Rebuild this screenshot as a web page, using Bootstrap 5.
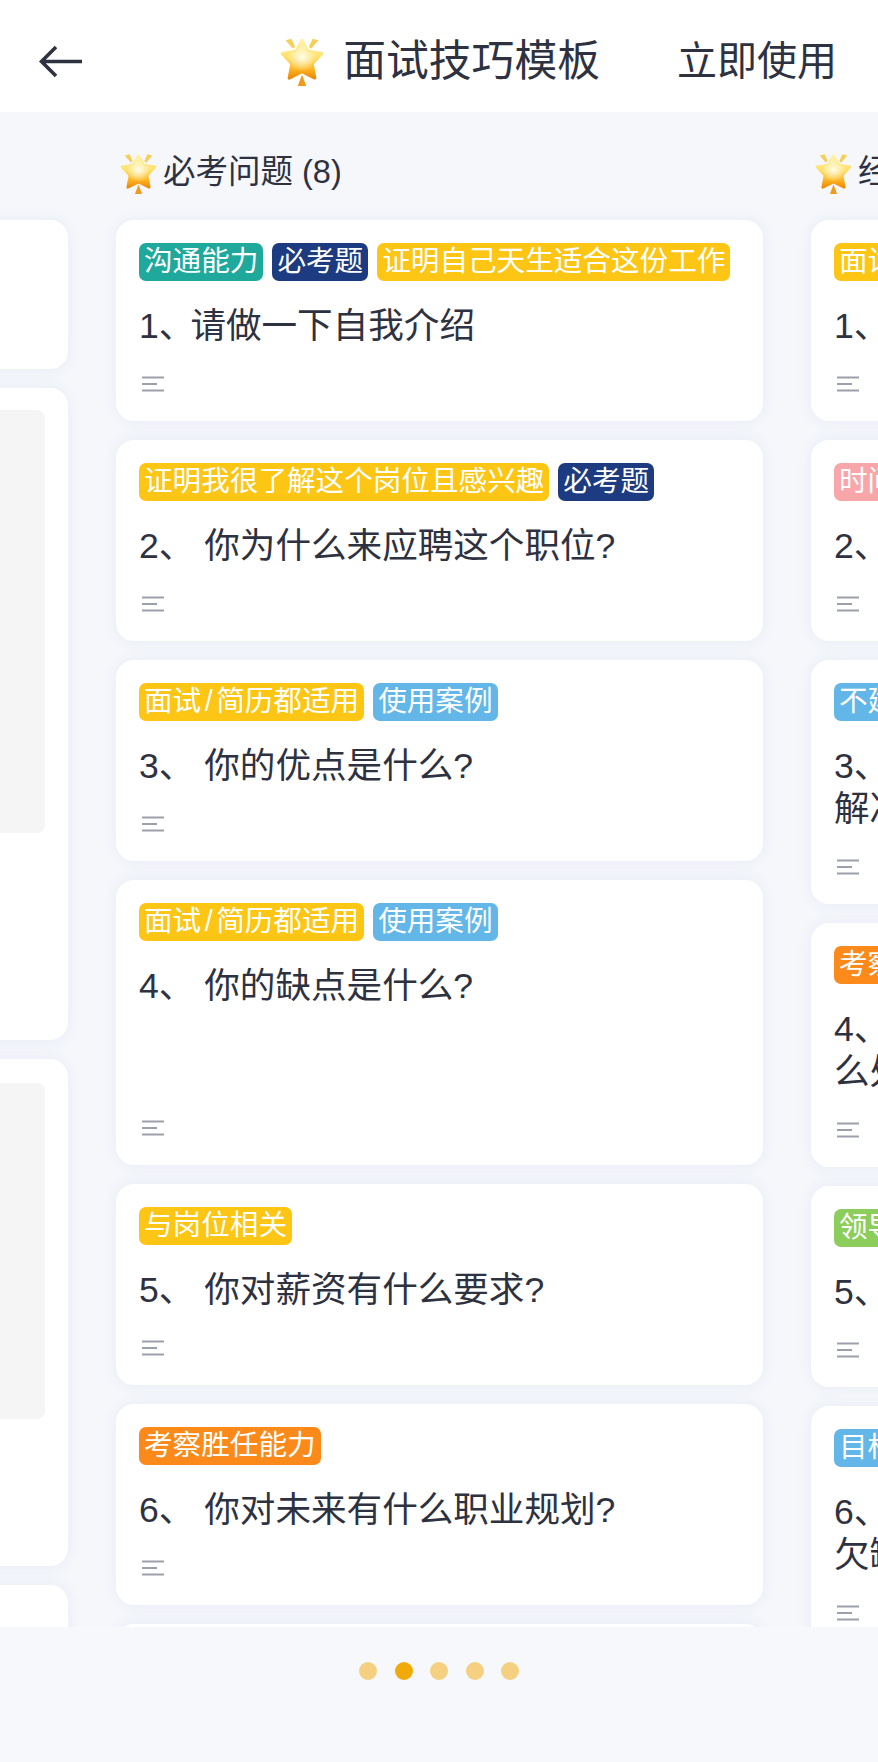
<!DOCTYPE html>
<html lang="zh-CN">
<head>
  <meta charset="UTF-8">
  <meta name="viewport" content="width=device-width, initial-scale=1.0">
  <title>面试技巧模板</title>
  <link href="https://cdn.jsdelivr.net/npm/bootstrap@5.3.0/dist/css/bootstrap.min.css" rel="stylesheet">
  <style>
    body {
      background: #f7f8fb;
      color: #2e3240;
      font-family: "Liberation Sans", "Noto Sans CJK SC", sans-serif;
      overflow-x: hidden;
    }
    .top-bar { height: 112px; padding: 10px 41px 0 39px; }
    .top-title { font-size: 42.8px; line-height: 56px; margin-left: 18px; }
    .top-action { font-size: 40px; line-height: 56px; margin-left: 77px; color: #2e3240; text-decoration: none; }
    .board { height: 1515px; overflow: hidden; background: #f5f7fb; }
    .board-track { margin-left: -579px; gap: 48px; }
    .board-col { flex: 0 0 647px; width: 647px; }
    .col-head { padding: 41px 0 28px 3px; height: 108px; font-size: 32.5px; line-height: 39px; white-space: nowrap; }
    .col-head svg { margin-right: 5px; }
    .task-list { gap: 19px; }
    .task { border: 0; border-radius: 18px; padding: 23px 23px 29px; box-shadow: 0 0 14px rgba(222, 227, 242, .6); }
    .tag-row { gap: 9px; height: 38px; }
    .tag {
      height: 38px; line-height: 37px; padding: 0 5px; border-radius: 7px;
      font-size: 28.6px; color: #fff; white-space: nowrap;
    }
    .tag-slash { margin: 0 3.500px; }
    .tag-gold { background: #fdc514; }
    .tag-teal { background: #1fa99c; }
    .tag-navy { background: #1c3b80; }
    .tag-sky { background: #62b6e8; }
    .tag-orange { background: #fb8a1a; }
    .tag-pink { background: #f8a6a9; }
    .tag-green { background: #8ccd5c; }
    .task-text { font-size: 35.6px; line-height: 43px; margin: 24px 0 28px; white-space: nowrap; }
    .task-text.tall-text { margin-bottom: 112px; }
    .num-mark { letter-spacing: -4px; }
    .task-icon { display: block; margin-left: 3px; }
    .doc-block { background: #f5f5f5; border-radius: 8px; height: 100%; }
    .blank-1 { height: 149px; }
    .blank-2 { height: 652px; padding: 22px 23px 207px 0; }
    .blank-3 { height: 507px; padding: 24px 23px 147px 0; }
    .blank-4 { height: 200px; }
    .pager { padding-top: 35px; gap: 17.5px; }
    .pager-dot { width: 18px; height: 18px; border-radius: 50%; background: #f4d080; }
    .pager-dot.on { background: #f0ab0a; }
  </style>
</head>
<body>

  <!-- shared shapes -->
  <svg width="0" height="0" class="position-absolute">
    <defs>
      <linearGradient id="starFill" x1="0" y1="0" x2="0" y2="1">
        <stop offset="0" stop-color="#fff3a8"/>
        <stop offset=".45" stop-color="#ffe06a"/>
        <stop offset=".75" stop-color="#fdb823"/>
        <stop offset="1" stop-color="#ee8a08"/>
      </linearGradient>
      <radialGradient id="starGlow" cx=".5" cy=".45" r=".38">
        <stop offset="0" stop-color="#fffde8"/>
        <stop offset="1" stop-color="#fffde8" stop-opacity="0"/>
      </radialGradient>
      <symbol id="glowStar" viewBox="0 0 43 47">
        <path d="M21.500 4 27 14.500 40 16.500 31 26 33.500 39.500 21.500 33.500 9.500 39.500 12 26 3 16.500 16 14.500Z" fill="url(#starFill)" stroke="url(#starFill)" stroke-width="3" stroke-linejoin="round"/>
        <path d="M21.500 4 27 14.500 40 16.500 31 26 33.500 39.500 21.500 33.500 9.500 39.500 12 26 3 16.500 16 14.500Z" fill="url(#starGlow)"/>
        <path d="M6 4 11.500 2.500 15 10 13 12Z" fill="#f6cf58"/>
        <path d="M37 4 31.500 2.500 28 10 30 12Z" fill="#f6cf58"/>
        <path d="M21.500 36.500 25.500 47H17.500Z" fill="#ef9a1c"/>
      </symbol>
      <symbol id="linesIcon" viewBox="0 0 22 16">
        <path d="M0 1.500H22M0 8H15M0 14.500H22" stroke="#9c9fac" stroke-width="2" fill="none"/>
      </symbol>
    </defs>
  </svg>

  <!-- Top bar -->
  <nav class="top-bar bg-white d-flex align-items-center">
    <svg width="43" height="33" viewBox="0 0 43 33" fill="none" stroke="#2e3240" stroke-width="3.600" aria-label="返回">
      <path d="M43 16.500H3M17 2 2.500 16.500 17 31"/>
    </svg>
    <div class="d-flex align-items-center ms-auto">
      <svg width="46" height="50"><use href="#glowStar"/></svg>
      <span class="top-title">面试技巧模板</span>
    </div>
    <a class="top-action" href="#">立即使用</a>
  </nav>

  <!-- Columns, scrolled sideways -->
  <main class="board">
    <div class="board-track d-flex">

      <section class="board-col">
        <div class="col-head">&nbsp;</div>
        <div class="task-list d-flex flex-column">
          <div class="card task blank-1"></div>
          <div class="card task blank-2"><div class="doc-block"></div></div>
          <div class="card task blank-3"><div class="doc-block"></div></div>
          <div class="card task blank-4"></div>
        </div>
      </section>

      <section class="board-col">
        <div class="col-head d-flex align-items-center">
          <svg width="39" height="42"><use href="#glowStar"/></svg>必考问题 (8)
        </div>
        <div class="task-list d-flex flex-column">
          <div class="card task">
            <div class="tag-row d-flex"><span class="tag tag-teal">沟通能力</span><span class="tag tag-navy">必考题</span><span class="tag tag-gold">证明自己天生适合这份工作</span></div>
            <p class="task-text">1<span class="num-mark">、</span>请做一下自我介绍</p>
            <svg class="task-icon" width="22" height="16"><use href="#linesIcon"/></svg>
          </div>
          <div class="card task">
            <div class="tag-row d-flex"><span class="tag tag-gold">证明我很了解这个岗位且感兴趣</span><span class="tag tag-navy">必考题</span></div>
            <p class="task-text">2、 你为什么来应聘这个职位?</p>
            <svg class="task-icon" width="22" height="16"><use href="#linesIcon"/></svg>
          </div>
          <div class="card task">
            <div class="tag-row d-flex"><span class="tag tag-gold">面试<span class="tag-slash">/</span>简历都适用</span><span class="tag tag-sky">使用案例</span></div>
            <p class="task-text">3、 你的优点是什么?</p>
            <svg class="task-icon" width="22" height="16"><use href="#linesIcon"/></svg>
          </div>
          <div class="card task">
            <div class="tag-row d-flex"><span class="tag tag-gold">面试<span class="tag-slash">/</span>简历都适用</span><span class="tag tag-sky">使用案例</span></div>
            <p class="task-text tall-text">4、 你的缺点是什么?</p>
            <svg class="task-icon" width="22" height="16"><use href="#linesIcon"/></svg>
          </div>
          <div class="card task">
            <div class="tag-row d-flex"><span class="tag tag-gold">与岗位相关</span></div>
            <p class="task-text">5、 你对薪资有什么要求?</p>
            <svg class="task-icon" width="22" height="16"><use href="#linesIcon"/></svg>
          </div>
          <div class="card task">
            <div class="tag-row d-flex"><span class="tag tag-orange">考察胜任能力</span></div>
            <p class="task-text">6、 你对未来有什么职业规划?</p>
            <svg class="task-icon" width="22" height="16"><use href="#linesIcon"/></svg>
          </div>
          <div class="card task"></div>
        </div>
      </section>

      <section class="board-col">
        <div class="col-head d-flex align-items-center">
          <svg width="39" height="42"><use href="#glowStar"/></svg>经典问题 (6)
        </div>
        <div class="task-list d-flex flex-column">
          <div class="card task">
            <div class="tag-row d-flex"><span class="tag tag-gold">面试<span class="tag-slash">/</span>简历都适用</span></div>
            <p class="task-text">1、</p>
            <svg class="task-icon" width="22" height="16"><use href="#linesIcon"/></svg>
          </div>
          <div class="card task">
            <div class="tag-row d-flex"><span class="tag tag-pink">时间管理</span></div>
            <p class="task-text">2、</p>
            <svg class="task-icon" width="22" height="16"><use href="#linesIcon"/></svg>
          </div>
          <div class="card task">
            <div class="tag-row d-flex"><span class="tag tag-sky">不建议</span></div>
            <p class="task-text">3、<br>解决</p>
            <svg class="task-icon" width="22" height="16"><use href="#linesIcon"/></svg>
          </div>
          <div class="card task">
            <div class="tag-row d-flex"><span class="tag tag-orange">考察胜任能力</span></div>
            <p class="task-text">4、<br>么处</p>
            <svg class="task-icon" width="22" height="16"><use href="#linesIcon"/></svg>
          </div>
          <div class="card task">
            <div class="tag-row d-flex"><span class="tag tag-green">领导力</span></div>
            <p class="task-text">5、</p>
            <svg class="task-icon" width="22" height="16"><use href="#linesIcon"/></svg>
          </div>
          <div class="card task">
            <div class="tag-row d-flex"><span class="tag tag-sky">目标管理</span></div>
            <p class="task-text">6、<br>欠缺</p>
            <svg class="task-icon" width="22" height="16"><use href="#linesIcon"/></svg>
          </div>
        </div>
      </section>

    </div>
  </main>

  <!-- Pager -->
  <div class="pager d-flex justify-content-center">
    <span class="pager-dot"></span>
    <span class="pager-dot on"></span>
    <span class="pager-dot"></span>
    <span class="pager-dot"></span>
    <span class="pager-dot"></span>
  </div>

</body>
</html>
